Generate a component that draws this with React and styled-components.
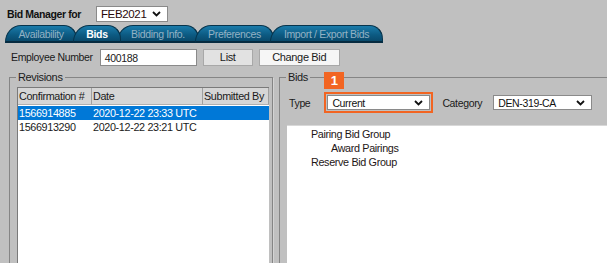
import React from 'react'
import styled, { createGlobalStyle } from 'styled-components'

const Global = createGlobalStyle`
    html, body {
        margin: 0;
        padding: 0;
        background: #c0c0c0;
        overflow: hidden;
    }
    body {
        font-family: "Liberation Sans", Arial, sans-serif;
        font-size: 10.5px;
        letter-spacing: -0.35px;
        color: #1a1a1a;
    }
`

const Page = styled.div`
    width: 607px;
    height: 263px;
    overflow: hidden;
    background: #c0c0c0;
`

const TitleRow = styled.div`
    display: flex;
    align-items: center;
    padding: 6px 0 0 7px;
    height: 16px;
`

const Title = styled.span`
    font-weight: bold;
    font-size: 10.5px;
    letter-spacing: -0.4px;
    color: #111;
    margin-right: 15px;
`

const SelectBox = styled.div`
    display: flex;
    align-items: center;
    justify-content: space-between;
    box-sizing: border-box;
    width: ${props => props.width}px;
    height: ${props => props.height || 16}px;
    padding: 0 6px 0 4px;
    background: #fff;
    border: 1px solid #8a8a8a;
    color: ${props => props.color || '#111'};
    font-size: ${props => props.size || 10.5}px;
`

const Chevron = () => (
    <svg width="9" height="6" viewBox="0 0 9 6">
        <path d="M1 1 L4.5 4.5 L8 1" fill="none" stroke="#111" strokeWidth="1.8" />
    </svg>
)

const TabBar = styled.div`
    display: flex;
    margin: 3px 0 0 5px;
    height: 18px;
`

const Tab = styled.div`
    position: relative;
    z-index: ${props => (props.active ? 2 : 1)};
    display: flex;
    align-items: center;
    justify-content: center;
    box-sizing: border-box;
    width: ${props => props.width}px;
    height: 18px;
    margin-left: ${props => (props.first ? 0 : -4)}px;
    padding-top: 1px;
    border: 1px solid #07344c;
    border-bottom: 2px solid #062b40;
    border-radius: 16px 13px 0 0 / 17px 14px 0 0;
    background: linear-gradient(#1b7cab, #0c5a82 60%, #094a6c);
    color: ${props => (props.active ? '#fff' : '#93b2c4')};
    font-weight: ${props => (props.active ? 'bold' : 'normal')};
    font-size: 10.5px;
    white-space: nowrap;
`

const EmployeeRow = styled.div`
    display: flex;
    align-items: center;
    margin: 6px 0 0 11px;
    height: 16px;
`

const Label = styled.span`
    color: #1a1a1a;
    margin-right: ${props => props.gap || 0}px;
    white-space: nowrap;
`

const TextInput = styled.div`
    box-sizing: border-box;
    width: 97px;
    height: 17px;
    padding: 1px 4px;
    background: #fff;
    border: 1px solid #8a8a8a;
    line-height: 14px;
`

const Button = styled.div`
    box-sizing: border-box;
    width: ${props => props.width}px;
    height: 17px;
    margin-left: 6px;
    background: ${props => (props.light ? '#f6f6f6' : '#e2e2e2')};
    border: 1px solid #a8a8a8;
    text-align: center;
    font-size: 11px;
    line-height: 15px;
    color: #1a1a1a;
`

const Panels = styled.div`
    display: grid;
    grid-template-columns: 264px 340px;
    gap: 6px;
    margin-top: 5px;
    padding-left: 9px;
`

const Group = styled.fieldset`
    margin: 0;
    height: 200px;
    padding: ${props => props.padTop}px 3px 0 7px;
    border: 1px solid #858585;
    box-shadow: 1px 1px 0 #d4d4d4;
    min-width: 0;
`

const Legend = styled.legend`
    padding: 0 2px;
    margin-left: -1px;
    font-size: 11px;
    line-height: 14px;
    color: #1a1a1a;
`

const ListBox = styled.div`
    height: 200px;
    background: #fff;
    border: 1px solid #7a7a7a;
    border-right: none;
    overflow: hidden;
`

const HeaderRow = styled.div`
    display: grid;
    grid-template-columns: 74px 111px 1fr;
    height: 17px;
    margin-bottom: 1px;
`

const HeaderCell = styled.div`
    background: #d6d6d6;
    border-right: 1px solid #a0a0a0;
    border-bottom: 1px solid #b0b0b0;
    padding: 2px 0 0 1px;
    font-size: 10.8px;
    color: #1a1a1a;
    white-space: nowrap;
    overflow: hidden;
`

const Row = styled.div`
    display: grid;
    grid-template-columns: 74px 111px 1fr;
    height: 14px;
    line-height: 14px;
    background: ${props => (props.selected ? '#0078d7' : 'transparent')};
    color: ${props => (props.selected ? '#fff' : '#1a1a1a')};
    font-size: 10.8px;
`

const Cell = styled.div`
    padding-left: 1px;
    white-space: nowrap;
`

const FilterRow = styled.div`
    display: flex;
    align-items: center;
    padding-left: 2px;
    height: 21px;
`

const Highlight = styled.div`
    position: relative;
    padding: 1px;
    border: 2px solid #f26522;
    margin: 0 9px 0 14px;
`

const Badge = styled.div`
    position: absolute;
    left: -2px;
    top: -22px;
    width: 20px;
    height: 17px;
    background: #f26522;
    color: #fff;
    font-weight: bold;
    font-size: 13px;
    letter-spacing: 0;
    line-height: 17px;
    text-align: center;
`

const TreeBox = styled.div`
    margin-top: 12px;
    height: 200px;
    background: #fff;
    padding: 1px 0 0 24px;
    border-top: 1px solid #d8d8d8;
`

const TreeItem = styled.div`
    height: 14px;
    line-height: 14px;
    padding-left: ${props => props.indent || 0}px;
    font-size: 10.8px;
    color: #1e1616;
`

const revisions = [
    { id: '1566914885', date: '2020-12-22 23:33 UTC', selected: true },
    { id: '1566913290', date: '2020-12-22 23:21 UTC' },
]

const tabs = [
    { name: 'Availability', width: 72 },
    { name: 'Bids', width: 48, active: true },
    { name: 'Bidding Info.', width: 82 },
    { name: 'Preferences', width: 79 },
    { name: 'Import / Export Bids', width: 113 },
]

const App = () => (
    <Page>
        <Global />
        <TitleRow>
            <Title>Bid Manager for</Title>
            <SelectBox width={72} color="#2a0a0a" size={11.5}>
                FEB2021
                <Chevron />
            </SelectBox>
        </TitleRow>
        <TabBar>
            {tabs.map((t, i) => (
                <Tab key={t.name} first={i === 0} active={t.active} width={t.width}>
                    {t.name}
                </Tab>
            ))}
        </TabBar>
        <EmployeeRow>
            <Label gap={7}>Employee Number</Label>
            <TextInput>400188</TextInput>
            <Button width={50}>List</Button>
            <Button width={81} light>Change Bid</Button>
        </EmployeeRow>
        <Panels>
            <Group padTop={3}>
                <Legend>Revisions</Legend>
                <ListBox>
                    <HeaderRow>
                        <HeaderCell>Confirmation #</HeaderCell>
                        <HeaderCell>Date</HeaderCell>
                        <HeaderCell>Submitted By</HeaderCell>
                    </HeaderRow>
                    {revisions.map(r => (
                        <Row key={r.id} selected={r.selected}>
                            <Cell>{r.id}</Cell>
                            <Cell>{r.date}</Cell>
                            <Cell />
                        </Row>
                    ))}
                </ListBox>
            </Group>
            <Group padTop={8}>
                <Legend>Bids</Legend>
                <FilterRow>
                    <Label>Type</Label>
                    <Highlight>
                        <Badge>1</Badge>
                        <SelectBox width={103} height={15}>
                            Current
                            <Chevron />
                        </SelectBox>
                    </Highlight>
                    <Label gap={11}>Category</Label>
                    <SelectBox width={99} height={15}>
                        DEN-319-CA
                        <Chevron />
                    </SelectBox>
                </FilterRow>
                <TreeBox>
                    <TreeItem>Pairing Bid Group</TreeItem>
                    <TreeItem indent={20}>Award Pairings</TreeItem>
                    <TreeItem>Reserve Bid Group</TreeItem>
                </TreeBox>
            </Group>
        </Panels>
    </Page>
)

export default App
